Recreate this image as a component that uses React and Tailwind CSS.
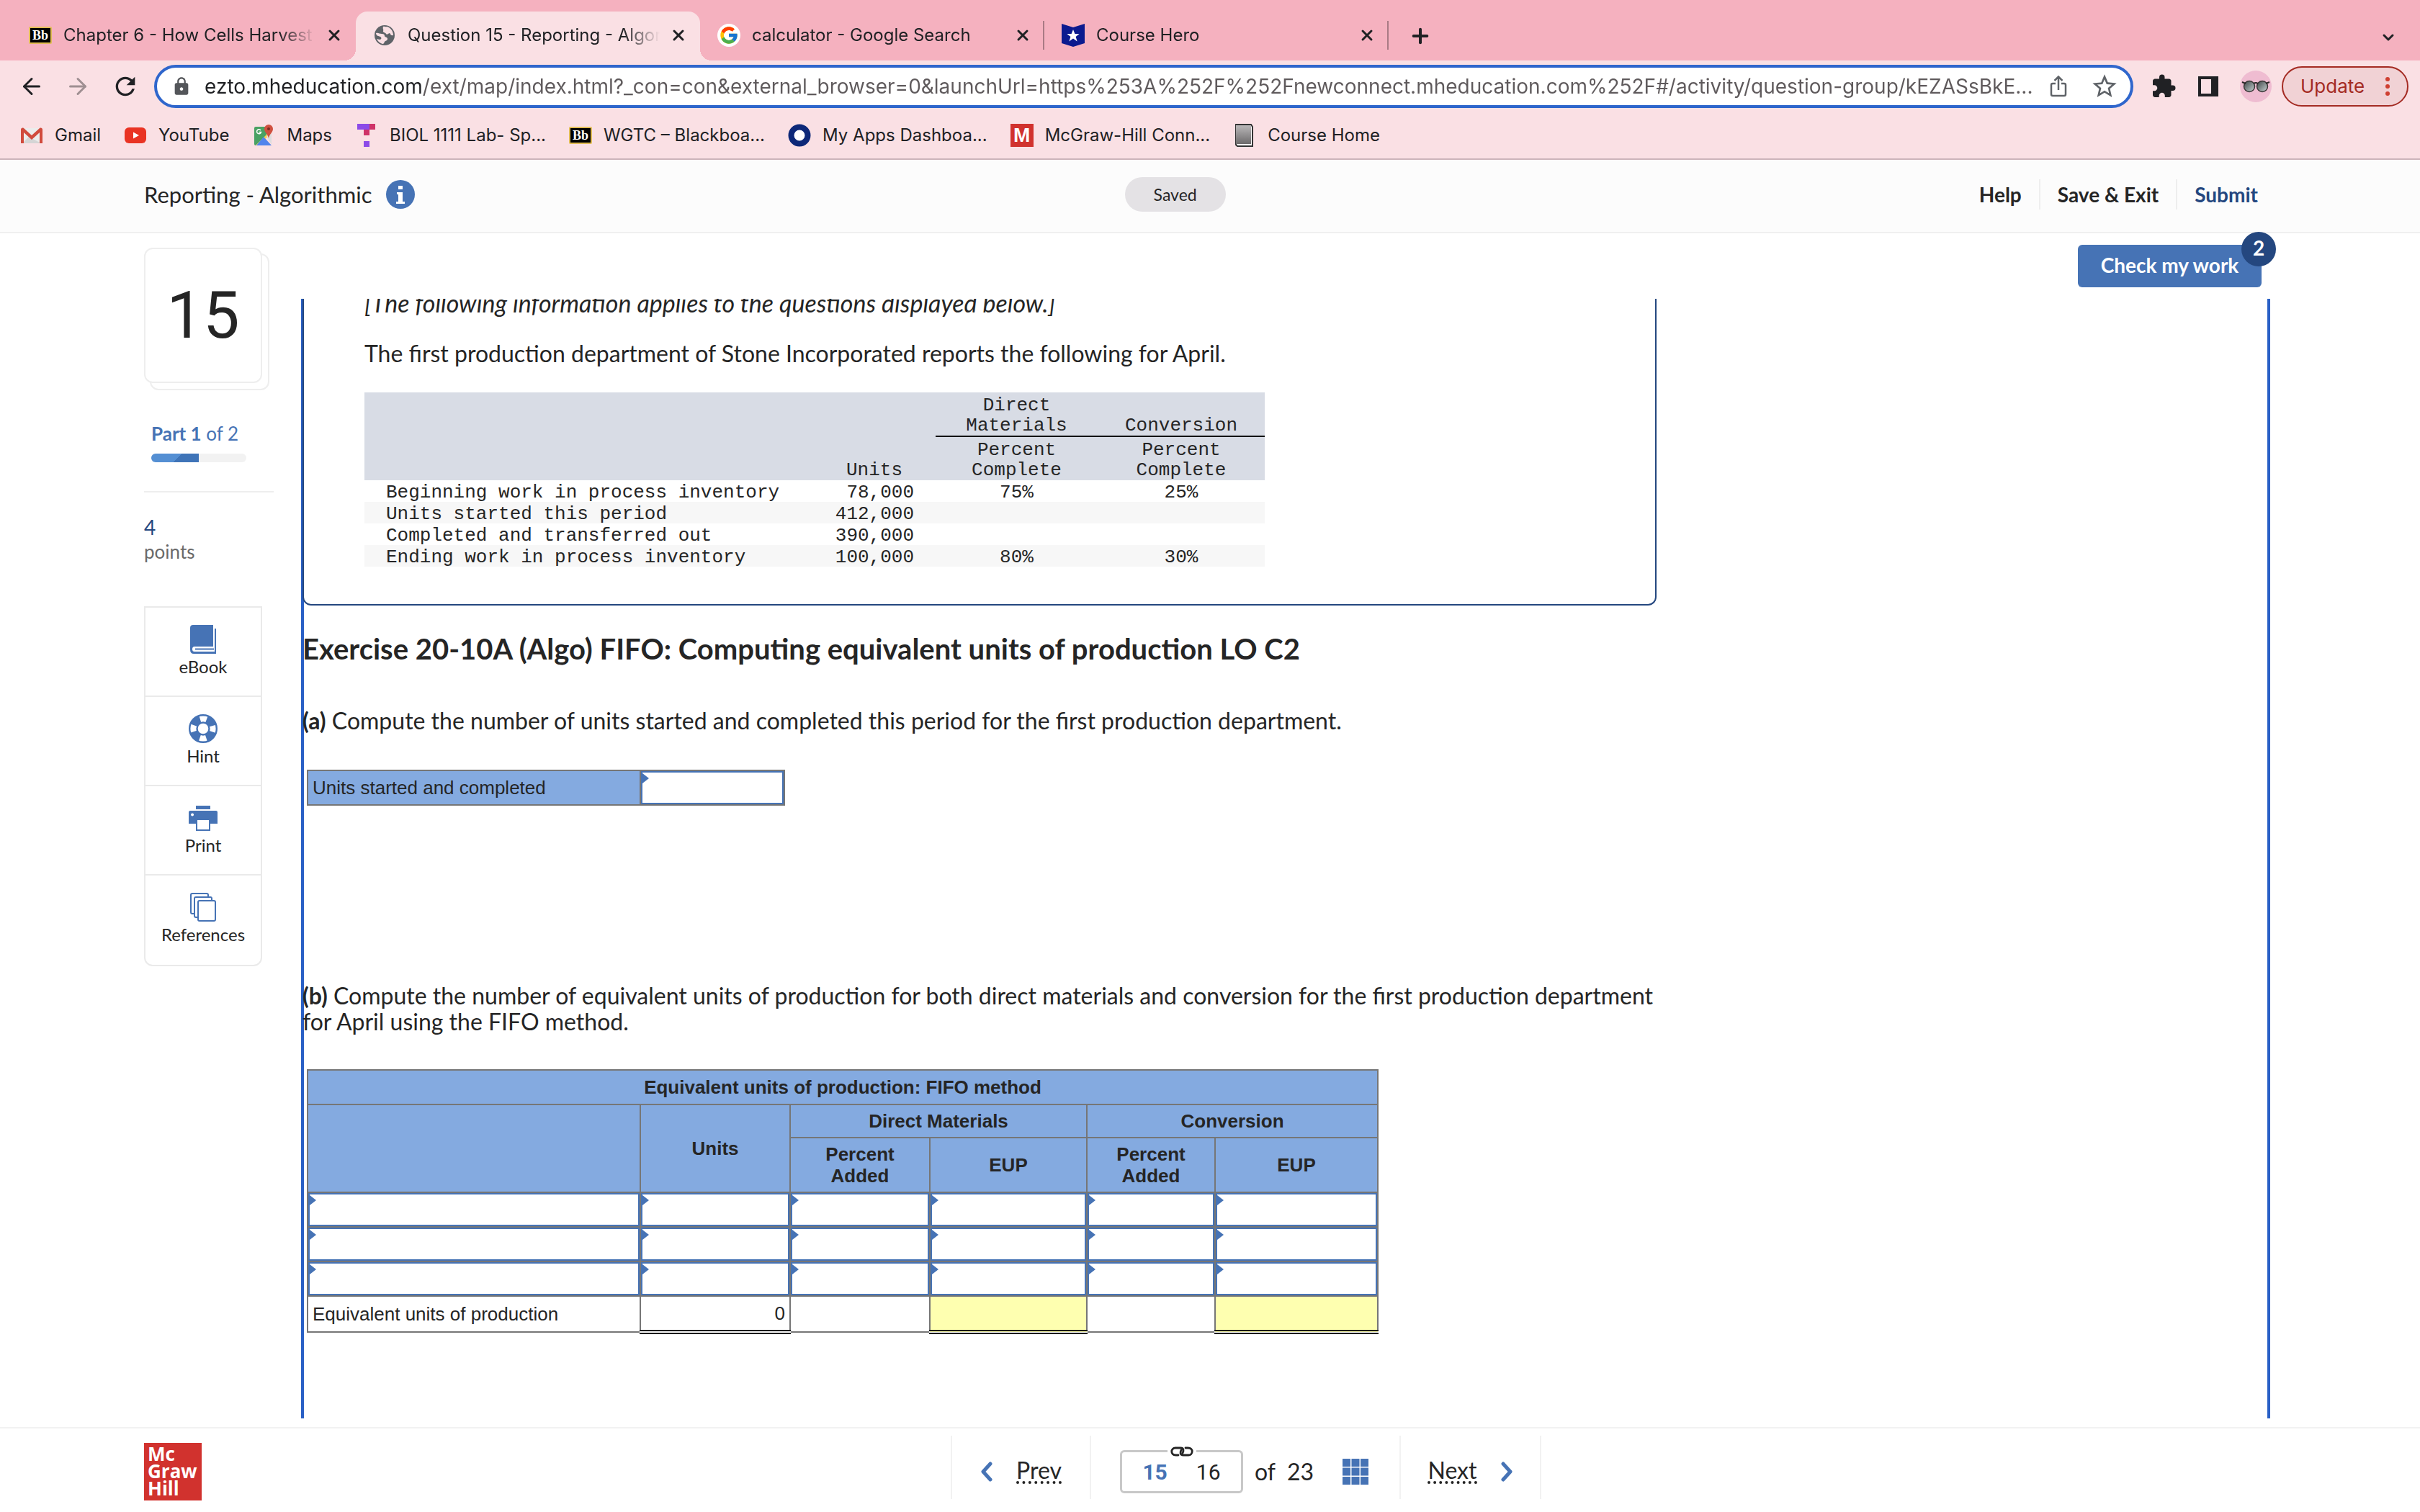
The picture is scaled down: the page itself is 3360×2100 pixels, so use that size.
import { useState } from "react";
import { FcGoogle } from "react-icons/fc";
import { MdExtension, MdStarBorder, MdRefresh, MdLock } from "react-icons/md";
import { ArrowLeft, ArrowRight, ChevronDown, Plus, X } from "lucide-react";

function BlackboardIcon() {
  return (
    <span className="flex h-6 w-8 shrink-0 items-center justify-center rounded-xs border-2 border-[#e2bd55] bg-black font-['Liberation_Serif',serif] text-[18px] leading-none font-bold text-white">Bb</span>
  );
}

function GlobeIcon() {
  return (
    <svg viewBox="0 0 28 28" className="h-7 w-8 shrink-0">
      <circle cx="14" cy="14" r="14" fill="#5f6368" />
      <path fill="#fae0e4" d="M2 11c3-1 5 1 8 1s4 1 4 3 4 1 4 4-3 2-4 4-1 3-3 3c-3-1-6-3-8-7l4 1c3 0 3-3 1-4s-6-1-6-5zM12 2c-1 3 1 4 0 6s3 2 4 4 4-1 5-1 1 4 5 3c0-6-4-11-9-12-2 1-3-1-5 0z" />
    </svg>
  );
}

function GoogleIcon() {
  return (
    <span className="flex h-8 w-8 shrink-0 items-center justify-center rounded-full bg-white">
      <FcGoogle className="h-7 w-7" />
    </span>
  );
}

function HeroIcon() {
  return (
    <svg viewBox="0 0 32 32" className="h-8 w-8 shrink-0">
      <path fill="#0b1a8f" d="M0 0l16 5L32 0v27l-16 5-16-5z" />
      <path fill="#fff" d="M16 8l2.4 6h6.2l-5 4 2 6.5-5.6-4-5.6 4 2-6.5-5-4h6.2z" />
    </svg>
  );
}

function GmailIcon() {
  return (
    <svg viewBox="0 0 32 32" className="h-8 w-8 shrink-0">
      <path fill="#ececec" d="M3 6h26v21H3z" />
      <path fill="#d5d5d5" d="M3 27l10-10 3 3 13 7z" />
      <path fill="#d14b3d" d="M1 8c0-2 2-3 4-2l11 10L27 6c2-1 4 0 4 2v19h-4V12L16 22 5 12v15H1z" />
    </svg>
  );
}

function YoutubeIcon() {
  return (
    <svg viewBox="0 0 32 32" className="h-8 w-8 shrink-0">
      <rect x="1" y="5" width="30" height="22" rx="6" fill="#e93323" />
      <path fill="#fff" d="M13 11.500l8 4.500-8 4.500z" />
    </svg>
  );
}

function MapsIcon() {
  return (
    <svg viewBox="0 0 32 32" className="h-8 w-8 shrink-0">
      <path fill="#4aa163" d="M3 6q0-2 2-2h15v12L5 30q-2 0-2-2z" />
      <path fill="#f6cf4f" d="M5 30L26 9v5L8 30z" />
      <path fill="#5184ec" d="M6 30l10-12 11 12z" />
      <path fill="#ddd" d="M20 17l7-4v16z" />
      <path fill="#d0503f" d="M23 1a6 6 0 0 1 6 6c0 5-5 7-6 13-1-6-6-8-6-13a6 6 0 0 1 6-6z" />
      <circle cx="23" cy="7" r="2" fill="#7b2c22" />
      <path fill="none" stroke="#fff" strokeWidth="1.500" d="M12 9a3 3 0 1 0 .5 2.500H9.500" />
    </svg>
  );
}

function TealIcon() {
  return (
    <svg viewBox="0 0 32 32" className="h-8 w-8 shrink-0">
      <path fill="#8c4be8" d="M3 0h18v8H3z" />
      <path fill="#cf3368" d="M20 0h8v8h-8zM12 8h8v8h-8z" />
      <path fill="#8c4be8" d="M12 24h8v8h-8z" />
    </svg>
  );
}

function AppsIcon() {
  return (
    <svg viewBox="0 0 32 32" className="h-8 w-8 shrink-0">
      <circle cx="16" cy="16" r="11.500" fill="#fff" stroke="#0d2878" strokeWidth="8" />
    </svg>
  );
}

function McGrawIcon() {
  return (
    <span className="flex h-8 w-8 shrink-0 items-center justify-center bg-[#d1322e] font-['Liberation_Sans',sans-serif] text-[28px] leading-none font-bold text-white">M</span>
  );
}

function CourseHomeIcon() {
  return (
    <svg viewBox="0 0 32 32" className="h-8 w-8 shrink-0">
      <defs>
        <linearGradient id="cover" x1="0" y1="0" x2="0" y2="1">
          <stop offset="0" stopColor="#b9b7b8" />
          <stop offset="1" stopColor="#6d6b6c" />
        </linearGradient>
      </defs>
      <path fill="#fff" stroke="#333" strokeWidth="2" d="M4 1h21l2 3v27H6l-2-2z" />
      <path fill="url(#cover)" d="M4 2h21v26H4z" />
    </svg>
  );
}

function ShareIcon() {
  return (
    <svg viewBox="0 0 24 32" className="h-8 w-6" fill="none" stroke="#5f6368" strokeWidth="2.500">
      <path d="M8 12H4q-2 0-2 2v13q0 2 2 2h16q2 0 2-2V14q0-2-2-2h-4M12 21V3M6.500 8L12 2.500 17.500 8" />
    </svg>
  );
}

function Avatar() {
  return (
    <svg viewBox="0 0 44 44" className="h-11 w-11">
      <defs>
        <linearGradient id="lens" x1="0" y1="0" x2="1" y2="1">
          <stop offset="0" stopColor="#3c4445" />
          <stop offset="1" stopColor="#c9d3d3" />
        </linearGradient>
      </defs>
      <circle cx="22" cy="22" r="22" fill="#efbcd1" />
      <circle cx="13" cy="22" r="7.500" fill="url(#lens)" stroke="#3a3636" strokeWidth="1.500" />
      <circle cx="31" cy="22" r="7.500" fill="url(#lens)" stroke="#3a3636" strokeWidth="1.500" />
      <path d="M3 16l5 2M41 16l-5 2M19 18q3-2 6 0" fill="none" stroke="#2a2727" strokeWidth="2" />
    </svg>
  );
}

function BookIcon() {
  return (
    <svg viewBox="0 0 36 40" className="h-10 w-9">
      <path fill="#4673b5" d="M4 0h28v30H6q-3 0-3 3.500T6 37h28V5h2v35H5q-5 0-5-6V4q0-4 4-4z" />
      <path fill="#4673b5" d="M7 32.500h26v2H7z" />
    </svg>
  );
}

function HintIcon() {
  return (
    <svg viewBox="0 0 40 40" className="h-10 w-10" fill="none" stroke="#4673b5">
      <circle cx="20" cy="20" r="18.800" strokeWidth="2.400" />
      <circle cx="20" cy="20" r="8.500" strokeWidth="2.400" />
      <circle cx="20" cy="20" r="13.500" strokeWidth="10" strokeDasharray="12.200 9" strokeDashoffset="-4.500" />
    </svg>
  );
}

function PrintIcon() {
  return (
    <svg viewBox="0 0 40 40" className="h-10 w-10">
      <path fill="#4673b5" d="M10 3h20v5H10z" />
      <path fill="#4673b5" fillRule="evenodd" d="M2 10h36q2 0 2 2v16H30v10H10V28H0V12q0-2 2-2zm3 3.500a2 2 0 1 0 .1 0zM12 23v13h16V23z" />
    </svg>
  );
}

function PagesIcon() {
  return (
    <svg viewBox="0 0 36 40" className="h-10 w-9" fill="#fff" stroke="#4673b5" strokeWidth="2">
      <rect x="1" y="1" width="24" height="28" rx="2" />
      <rect x="6" y="6" width="24" height="28" rx="2" />
      <rect x="11" y="11" width="24" height="28" rx="2" />
    </svg>
  );
}

function InfoIcon() {
  return (
    <svg viewBox="0 0 40 40" className="h-10 w-10">
      <circle cx="20" cy="20" r="20" fill="#4673b5" />
      <path fill="#fff" d="M17 8h6v5h-6zM15 17h8v13h3v3H14v-3h3V20h-2z" />
    </svg>
  );
}

function LinkIcon() {
  return (
    <svg viewBox="0 0 32 14" className="h-[14px] w-8" fill="none" stroke="#252525" strokeWidth="2.800" strokeLinecap="round">
      <path d="M11 12H7.500C-.5 12 .5 2 7 2h7c5 0 4.500 4 3 7M21 2h3.500c8 0 7 10 .5 10h-7c-5 0-4.500-4-3-7" />
    </svg>
  );
}

function Chevron({ flip }) {
  return (
    <svg viewBox="0 0 18 28" className="h-7 w-[18px]" fill="none" stroke="#4673b5" strokeWidth="5" strokeLinecap="round" strokeLinejoin="round">
      <path d={flip ? "M4 3l10 11L4 25" : "M14 3L4 14l10 11"} />
    </svg>
  );
}

const tabs = [
  { title: "Chapter 6 - How Cells Harvest", icon: BlackboardIcon },
  { title: "Question 15 - Reporting - Algor", icon: GlobeIcon, active: true },
  { title: "calculator - Google Search", icon: GoogleIcon, divider: true },
  { title: "Course Hero", icon: HeroIcon, divider: true },
];

const bookmarks = [
  { label: "Gmail", icon: GmailIcon },
  { label: "YouTube", icon: YoutubeIcon },
  { label: "Maps", icon: MapsIcon },
  { label: "BIOL 1111 Lab- Sp...", icon: TealIcon },
  { label: "WGTC – Blackboa...", icon: BlackboardIcon },
  { label: "My Apps Dashboa...", icon: AppsIcon },
  { label: "McGraw-Hill Conn...", icon: McGrawIcon },
  { label: "Course Home", icon: CourseHomeIcon },
];

const tools = [
  { label: "eBook", icon: BookIcon },
  { label: "Hint", icon: HintIcon },
  { label: "Print", icon: PrintIcon },
  { label: "References", icon: PagesIcon },
];

const inventory = [
  ["Beginning work in process inventory", "78,000", "75%", "25%"],
  ["Units started this period", "412,000", "", ""],
  ["Completed and transferred out", "390,000", "", ""],
  ["Ending work in process inventory", "100,000", "80%", "30%"],
];

const eupColumns = ["Item", "Units", "Direct materials percent added", "Direct materials EUP", "Conversion percent added", "Conversion EUP"];

function Browser() {
  const [url, setUrl] = useState("ezto.mheducation.com/ext/map/index.html?_con=con&external_browser=0&launchUrl=https%253A%252F%252Fnewconnect.mheducation.com%252F#/activity/question-group/kEZASsBkE...");

  return (
    <div className="shrink-0 border-b-2 border-[#ccb4ba] bg-[#fae0e4] font-['Inter',sans-serif] text-2xl text-[#202124]">
      <div className="flex h-[84px] items-end bg-[#f5b1bf] pl-4">
        {tabs.map(({ title, icon: Icon, active, divider }) => (
          <div key={title} className={"relative flex h-[68px] w-[478px] items-center pr-[18px] pb-[2px] pl-6 " + (active ? "rounded-t-2xl bg-[#fae0e4]" : "")}>
            {active && (
              <>
                <span className="absolute bottom-0 -left-4 h-4 w-4 bg-[radial-gradient(circle_at_0_0,transparent_16px,#fae0e4_16px)]" />
                <span className="absolute -right-4 bottom-0 h-4 w-4 bg-[radial-gradient(circle_at_100%_0,transparent_16px,#fae0e4_16px)]" />
              </>
            )}
            <Icon />
            <span className="ml-4 flex-1 whitespace-nowrap [mask-image:linear-gradient(to_right,black_300px,transparent_350px)]">{title}</span>
            <button aria-label="Close tab"><X className="h-6 w-6" strokeWidth={3} /></button>
            {divider && <span className="absolute right-0 h-10 w-[2px] bg-[#a97a84]" />}
          </div>
        ))}
        <button aria-label="New tab" className="mb-[18px] ml-7"><Plus className="h-8 w-8" strokeWidth={3} /></button>
        <button aria-label="Search tabs" className="mr-8 mb-5 ml-auto"><ChevronDown className="h-6 w-6" strokeWidth={3} /></button>
      </div>

      <div className="flex h-[72px] items-center pr-4 pl-[26px]">
        <div className="flex w-[188px] items-center gap-7">
          <button aria-label="Back"><ArrowLeft className="h-9 w-9" strokeWidth={2} /></button>
          <button aria-label="Forward" className="text-[#9f8f92]"><ArrowRight className="h-9 w-9" strokeWidth={2} /></button>
          <button aria-label="Reload"><MdRefresh className="h-10 w-10" /></button>
        </div>
        <div className="flex h-[60px] min-w-0 flex-1 items-center rounded-full border-4 border-[#2f66cc] bg-white pr-4 pl-5">
          <MdLock className="h-7 w-7 shrink-0 text-[#54565a]" />
          <input
            aria-label="Address"
            value={url}
            onChange={ev => setUrl(ev.target.value)}
            className="ml-[18px] min-w-0 flex-1 bg-[linear-gradient(to_right,#202124_303px,#5f5a5c_303px)] bg-clip-text text-[28px] leading-10 text-transparent outline-none"
          />
          <button aria-label="Share"><ShareIcon /></button>
          <button aria-label="Bookmark this page" className="ml-8"><MdStarBorder className="h-10 w-10 text-[#5f6368]" /></button>
        </div>
        <div className="ml-6 flex items-center gap-[30px]">
          <button aria-label="Extensions"><MdExtension className="h-9 w-9" /></button>
          <button aria-label="Side panel" className="h-7 w-7 border-4 border-r-[10px] border-[#202124]" />
          <button aria-label="Profile"><Avatar /></button>
        </div>
        <button className="ml-[14px] flex h-14 w-44 items-center justify-between rounded-full border-2 border-[#a42b23] bg-[#f1d2d5] pr-6 pl-6 text-[26px] text-[#a42b23]">
          Update
          <svg viewBox="0 0 6 28" className="h-7 w-[6px]" fill="#cf3f31">
            <circle cx="3" cy="4" r="3" />
            <circle cx="3" cy="14" r="3" />
            <circle cx="3" cy="24" r="3" />
          </svg>
        </button>
      </div>

      <nav className="flex h-16 items-center gap-8 pl-7">
        {bookmarks.map(({ label, icon: Icon }) => (
          <a key={label} href="#" className="flex items-center gap-4 whitespace-nowrap"><Icon />{label}</a>
        ))}
      </nav>
    </div>
  );
}

function Sidebar() {
  return (
    <aside className="w-[180px] shrink-0 pt-5">
      <div className="relative h-[198px] w-[174px]">
        <div className="absolute right-0 bottom-0 h-[190px] w-[166px] rounded-xl border-2 border-[#eee]" />
        <div className="relative flex h-[188px] w-[164px] items-center justify-center rounded-xl border-2 border-[#eee] bg-white font-['Roboto',sans-serif] text-[90px]">15</div>
      </div>
      <div className="ml-[10px] pt-11 text-[26px] leading-8 text-[#4673b5]"><b>Part 1</b> of 2</div>
      <div className="mt-3 ml-[10px] h-3 w-[132px] overflow-hidden rounded-full bg-[#f2f2f2]">
        <div className="h-full w-1/2 bg-[linear-gradient(135deg,#548fd3_30px,#3f74b8_30px)]" />
      </div>
      <div className="mt-10 border-t-2 border-[#eee] pt-[30px]">
        <div className="text-[28px] leading-9 text-[#24477f]">4</div>
        <div className="text-[26px] leading-8 text-[#6a6a6a]">points</div>
      </div>
      <div className="mt-[60px] w-[164px] rounded-b-xl border-2 border-[#eaeaea]">
        {tools.map(({ label, icon: Icon }) => (
          <button key={label} className="flex h-[124px] w-full flex-col items-center border-b-2 border-[#eaeaea] pt-6 text-2xl last:border-b-0">
            <Icon />
            <span className="mt-[2px] leading-8">{label}</span>
          </button>
        ))}
      </div>
    </aside>
  );
}

function AnswerCell({ label }) {
  return (
    <td className="relative border-2 border-[#767676] p-0">
      <span className="absolute top-[3px] left-[2px] h-[14px] w-[9px] bg-[#4673b5] [clip-path:polygon(0_0,100%_50%,0_100%)]" />
      <input aria-label={label} className="block h-[46px] w-full border-2 border-[#4673b5] px-2 text-right outline-none" />
    </td>
  );
}

function TotalCell({ children, yellow }) {
  return (
    <td className={"border-x-2 border-t-2 border-b-[6px] border-x-[#767676] border-t-black border-b-black [border-bottom-style:double] px-[6px] text-right " + (yellow ? "bg-[#feffb0]" : "")}>{children}</td>
  );
}

function Passage() {
  return (
    <section className="-mt-3 w-[1880px] rounded-b-xl border-2 border-t-0 border-[#24477f] pr-10 pb-[52px] pl-[84px]">
      <p className="text-[34px] italic">[The following information applies to the questions displayed below.]</p>
      <p className="mt-[34px]">The first production department of Stone Incorporated reports the following for April.</p>
      <table className="mt-9 w-[1250px] table-fixed font-['Liberation_Mono',monospace] text-[26px] leading-[26px]">
        <colgroup>
          <col />
          <col className="w-[170px]" />
          <col className="w-[225px]" />
          <col className="w-[232px]" />
        </colgroup>
        <thead className="bg-[#d8dce5] leading-7">
          <tr>
            <th rowSpan={2} />
            <th rowSpan={2} className="p-0 align-bottom font-normal">Units</th>
            <th className="border-b-2 border-black p-0 pt-1 align-bottom font-normal">Direct<br />Materials</th>
            <th className="border-b-2 border-black p-0 pt-1 align-bottom font-normal">Conversion</th>
          </tr>
          <tr>
            <th className="p-0 pt-1 font-normal">Percent<br />Complete</th>
            <th className="p-0 pt-1 font-normal">Percent<br />Complete</th>
          </tr>
        </thead>
        <tbody>
          {inventory.map(([name, units, materials, conversion]) => (
            <tr key={name} className="h-[30px] even:bg-[#f7f7f7]">
              <td className="p-0 pt-1 pl-[30px]">{name}</td>
              <td className="p-0 pt-1 pr-[30px] text-right">{units}</td>
              <td className="p-0 pt-1 text-center">{materials}</td>
              <td className="p-0 pt-1 text-center">{conversion}</td>
            </tr>
          ))}
        </tbody>
      </table>
    </section>
  );
}

function Question() {
  const head = "border-2 border-[#767676] p-0 font-bold";

  return (
    <div className="min-h-0 flex-1 overflow-hidden pl-[2px] text-[32px] leading-9 shadow-[inset_4px_0_#2960c6,inset_-4px_0_#2960c6]">
      <Passage />
      <h1 className="mt-9 text-[40px] leading-[48px] font-bold">Exercise 20-10A (Algo) FIFO: Computing equivalent units of production LO C2</h1>
      <p className="mt-[58px]"><b>(a)</b> Compute the number of units started and completed this period for the first production department.</p>
      <table className="mt-[50px] ml-[6px] w-[664px] table-fixed border-collapse font-['Liberation_Sans',sans-serif] text-[26px] leading-[30px]">
        <tbody>
          <tr>
            <th className="w-[462px] border-2 border-[#767676] bg-[#84aae0] px-[6px] text-left font-normal">Units started and completed</th>
            <AnswerCell label="Units started and completed" />
          </tr>
        </tbody>
      </table>
      <p className="mt-[246px] max-w-[1880px]"><b>(b)</b> Compute the number of equivalent units of production for both direct materials and conversion for the first production department for April using the FIFO method.</p>
      <table className="mt-12 ml-[6px] w-[1488px] table-fixed border-collapse font-['Liberation_Sans',sans-serif] text-[26px] leading-[30px]">
        <colgroup>
          <col className="w-[462px]" />
          <col className="w-[208px]" />
          <col className="w-[194px]" />
          <col className="w-[218px]" />
          <col className="w-[178px]" />
          <col />
        </colgroup>
        <thead className="bg-[#84aae0]">
          <tr className="h-12">
            <th colSpan={6} className={head}>Equivalent units of production: FIFO method</th>
          </tr>
          <tr className="h-[46px]">
            <th rowSpan={2} className={head} />
            <th rowSpan={2} className={head}>Units</th>
            <th colSpan={2} className={head}>Direct Materials</th>
            <th colSpan={2} className={head}>Conversion</th>
          </tr>
          <tr className="h-[76px]">
            <th className={head}>Percent<br />Added</th>
            <th className={head}>EUP</th>
            <th className={head}>Percent<br />Added</th>
            <th className={head}>EUP</th>
          </tr>
        </thead>
        <tbody>
          {[1, 2, 3].map(row => (
            <tr key={row}>
              {eupColumns.map(name => <AnswerCell key={name} label={name + ", row " + row} />)}
            </tr>
          ))}
          <tr className="h-[50px]">
            <td className="border-2 border-[#767676] px-[6px]">Equivalent units of production</td>
            <TotalCell>0</TotalCell>
            <td className="border-2 border-[#767676]" />
            <TotalCell yellow />
            <td className="border-2 border-[#767676]" />
            <TotalCell yellow />
          </tr>
        </tbody>
      </table>
    </div>
  );
}

function Footer() {
  return (
    <footer className="grid h-[118px] shrink-0 grid-cols-[1fr_auto_1fr] border-t-2 border-[#f2f2f2] pr-[100px] pl-[200px] text-[32px]">
      <div className="mt-5 h-20 w-20 bg-[#d1322e] px-[5px] pt-[3px] font-['Open_Sans',sans-serif] text-[26px] leading-6 font-bold text-white">Mc<br />Graw<br />Hill</div>
      <div className="mt-[10px] flex h-[88px] divide-x-2 divide-[#f2f2f2] border-x-2 border-[#f2f2f2]">
        <button className="flex w-[193px] items-center justify-center gap-8 pt-3">
          <Chevron />
          <span className="border-b-4 border-dotted border-[#252525] leading-[30px]">Prev</span>
        </button>
        <div className="flex w-[430px] items-center pt-3 pl-10">
          <div className="relative flex h-[60px] w-[171px] items-center justify-center gap-10 rounded-md border-[3px] border-[#c8c8c8] font-['Roboto',sans-serif] text-[30px]">
            <span className="absolute -top-2 bg-white px-1"><LinkIcon /></span>
            <b className="text-[#4673b5]">15</b>
            <span>16</span>
          </div>
          <span className="ml-4">of</span>
          <span className="ml-4">23</span>
          <button aria-label="All questions" className="ml-10">
            <svg viewBox="0 0 36 36" className="h-9 w-9" fill="#4673b5">
              <path d="M0 0h11v11H0zM12.500 0h11v11h-11zM25 0h11v11H25zM0 12.500h11v11H0zM12.500 12.500h11v11h-11zM25 12.500h11v11H25zM0 25h11v11H0zM12.500 25h11v11h-11zM25 25h11v11H25z" />
            </svg>
          </button>
        </div>
        <button className="flex w-[193px] items-center justify-center gap-8 pt-3">
          <span className="border-b-4 border-dotted border-[#252525] leading-[30px]">Next</span>
          <Chevron flip />
        </button>
      </div>
    </footer>
  );
}

export default function App() {
  return (
    <div className="flex h-screen flex-col overflow-hidden bg-white font-['Lato',sans-serif] text-[#252525]">
      <Browser />
      <header className="grid h-[102px] shrink-0 grid-cols-[95fr_auto_100fr] items-center border-b-2 border-[#f0f0f0] bg-[#fcfcfc] pr-[225px] pb-1 pl-[200px] text-[28px]">
        <div className="flex items-center gap-5 text-[31px]">
          Reporting - Algorithmic
          <button aria-label="Assignment info"><InfoIcon /></button>
        </div>
        <div className="flex h-12 w-[140px] items-center justify-center rounded-full bg-[#e4e2e5] text-[23px]">Saved</div>
        <nav className="flex items-center justify-end font-bold">
          <a href="#" className="pr-6">Help</a>
          <a href="#" className="border-x-2 border-[#eee] px-6">Save &amp; Exit</a>
          <a href="#" className="pl-6 text-[#24477f]">Submit</a>
        </nav>
      </header>
      <main className="flex min-h-0 flex-1 pl-[200px]">
        <Sidebar />
        <div className="ml-[38px] flex min-w-0 flex-1 flex-col pr-52 pb-3">
          <div className="flex shrink-0 justify-end pt-4 pr-3 pb-4">
            <button className="relative h-[59px] w-[255px] rounded-md bg-[#4673b5] pb-1 text-[28px] font-bold text-white">
              Check my work
              <span className="absolute -top-[18px] -right-5 flex h-12 w-12 items-center justify-center rounded-full bg-[#24477f] pb-1">2</span>
            </button>
          </div>
          <Question />
        </div>
      </main>
      <Footer />
    </div>
  );
}
